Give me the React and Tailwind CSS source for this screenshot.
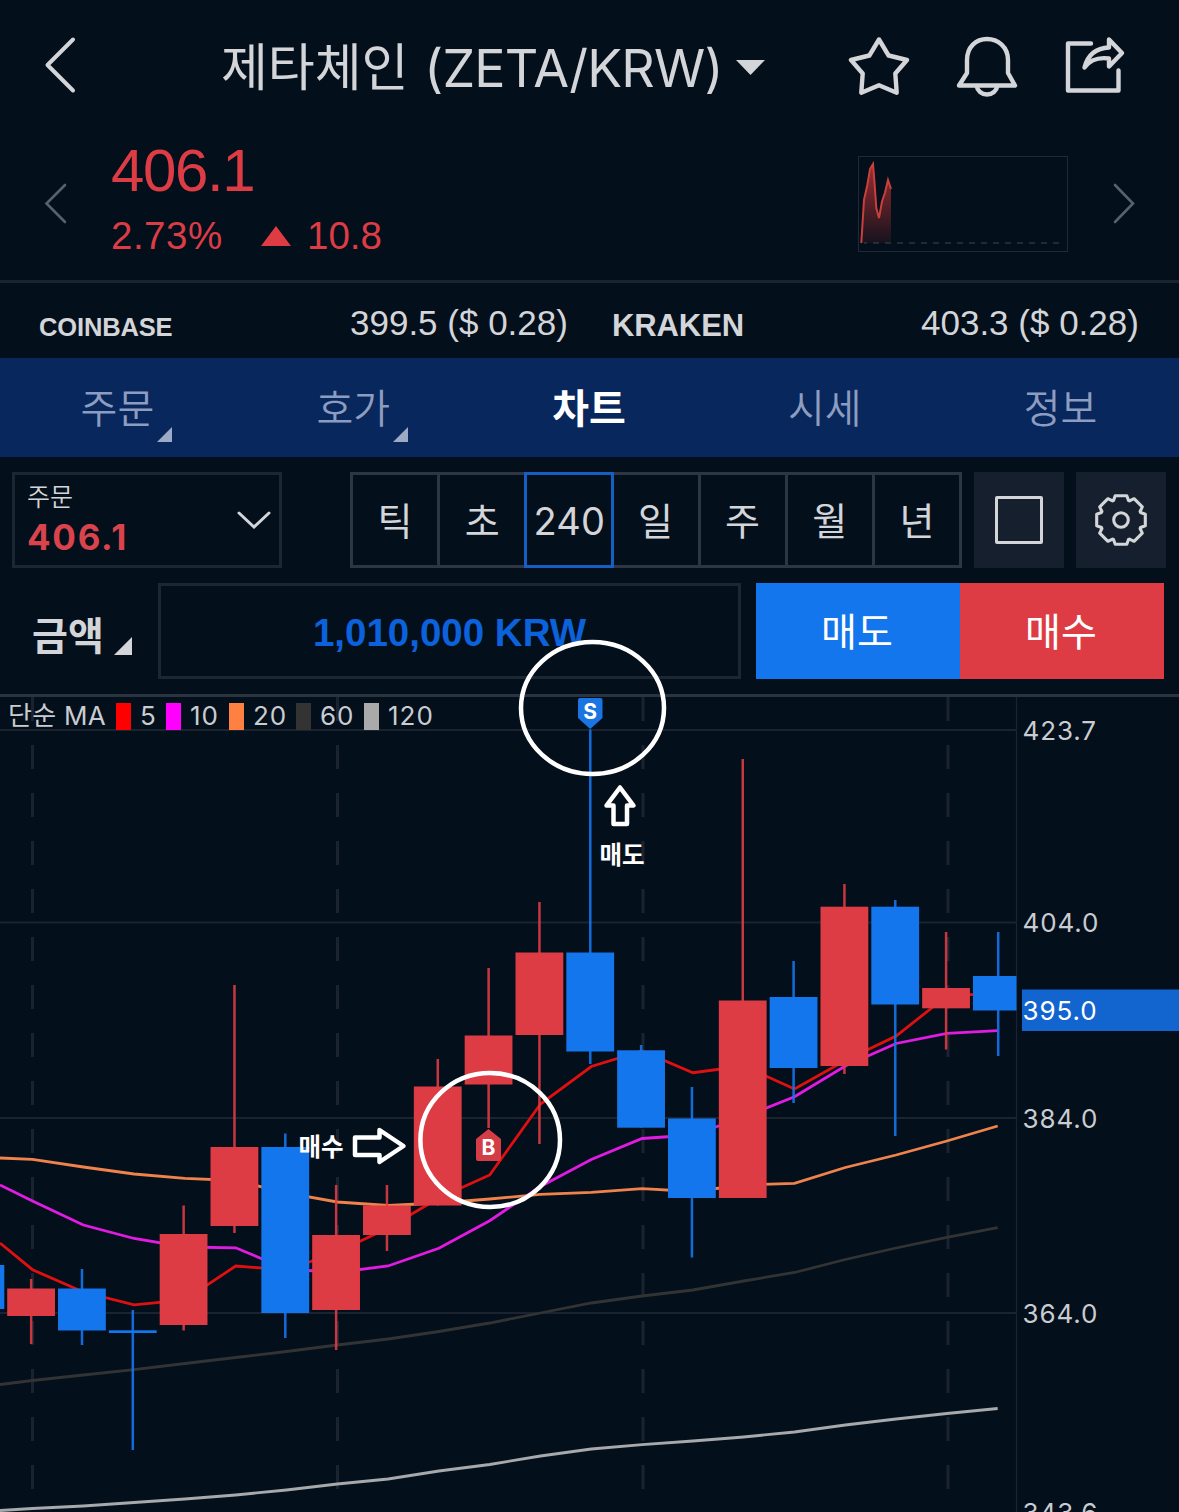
const RED = '#dd3c44';
const BLUE = '#1476ec';

const TABS = [
  { label: '주문', more: true },
  { label: '호가', more: true },
  { label: '차트', active: true },
  { label: '시세' },
  { label: '정보' },
];

const PERIODS = ['틱', '초', '240', '일', '주', '월', '년'];

const LEGEND = [
  { label: '5', color: 'bg-[#ff0000]', width: 'w-[26px]' },
  { label: '10', color: 'bg-[#ff00ff]', width: 'w-[39px]' },
  { label: '20', color: 'bg-[#ff8040]', width: 'w-[43px]' },
  { label: '60', color: 'bg-[#333333]', width: 'w-[44px]' },
  { label: '120', color: 'bg-[#aaaaaa]', width: 'w-[56px]' },
];

// [up, high, body top, body bottom, low]
const CANDLES = [
  [true, 1279, 1288.5, 1316, 1344],
  [false, 1269, 1288.5, 1330.5, 1345],
  [false, 1310, 1330.3, 1333, 1450],
  [true, 1205.5, 1234, 1325, 1330.5],
  [true, 985, 1147, 1226, 1233],
  [false, 1133.5, 1147, 1313, 1338],
  [true, 1185, 1235, 1310, 1350],
  [true, 1185, 1205.5, 1235, 1251],
  [true, 1059, 1086.5, 1205.5, 1205.5],
  [true, 968, 1035.5, 1084.5, 1128],
  [true, 902, 952.5, 1035, 1144],
  [false, 729.5, 952.5, 1051.5, 1064],
  [false, 1045, 1050.3, 1127.7, 1127.7],
  [false, 1087, 1118.5, 1198, 1257.5],
  [true, 759, 1000.5, 1198, 1198],
  [false, 961, 997, 1068, 1103],
  [true, 884, 906.7, 1066, 1074],
  [false, 900, 906.7, 1004.5, 1136],
  [true, 932, 988, 1008.3, 1049.5],
  [false, 932, 976, 1010.5, 1056],
];

// first value sits on the left edge, the rest one per candle
const AVERAGES = [
  { color: '#a7a9ac', values: [1510.5, 1508.5, 1506, 1502.5, 1499, 1495, 1490, 1484, 1479, 1471, 1464.5, 1456, 1449, 1444.6, 1441, 1437, 1432, 1425, 1419, 1413.5, 1408.5] },
  { color: '#333333', values: [1384.5, 1380.5, 1375, 1369.7, 1363.5, 1357.5, 1351.5, 1345, 1339, 1331.5, 1323, 1313, 1303, 1296, 1290, 1281, 1272.5, 1259.5, 1248, 1237.3, 1227.7] },
  { color: '#f0834c', values: [1158, 1159.3, 1167, 1174, 1178.3, 1180.5, 1193, 1202, 1205.5, 1203, 1199, 1194.3, 1192.3, 1188.7, 1191.5, 1185, 1183.3, 1167.5, 1155, 1141, 1126] },
  { color: '#e21be2', values: [1185, 1201, 1225, 1238.5, 1247, 1247.8, 1269, 1272.5, 1266, 1248.3, 1220.7, 1186.5, 1159.5, 1138.5, 1135, 1117, 1096.7, 1066, 1043.5, 1033.3, 1030.7] },
  { color: '#e01010', values: [1243, 1269.7, 1292, 1304.8, 1300, 1266, 1270, 1252, 1228, 1198, 1175, 1104, 1066.5, 1051, 1072.7, 1066, 1089, 1060.5, 1036, 996, 993] },
];

const PRICES = [
  { label: '423.7', y: 730 },
  { label: '404.0', y: 922.5 },
  { label: '384.0', y: 1118 },
  { label: '364.0', y: 1313 },
  { label: '343.6', y: 1512 },
];

const TOP = 697;

function gearPoints() {
  const tooth = [[-7.5, -19.5], [-5.8, -24.3], [5.8, -24.3], [7.5, -19.5]];
  const points = [];
  for (let i = 0; i < 8; i++) {
    const a = (i * Math.PI) / 4;
    tooth.forEach(([x, y]) => {
      points.push(`${x * Math.cos(a) - y * Math.sin(a)},${x * Math.sin(a) + y * Math.cos(a)}`);
    });
  }
  return points.join(' ');
}

function Corner({ className }) {
  return (
    <svg className={className} viewBox="0 0 16 16" preserveAspectRatio="none" fill="currentColor">
      <path d="M16 0V16H0Z" />
    </svg>
  );
}

function Header() {
  return (
    <header className="flex h-[130px] items-start pl-11 text-[#d3d5d8]">
      <svg className="mt-9 h-[58px] w-8" viewBox="0 0 32 58" fill="none" stroke="currentColor" strokeWidth="4" strokeLinecap="round" strokeLinejoin="round">
        <path d="M29 3.5L3.5 29L29 54.5" />
      </svg>
      <h1 className="mt-[29px] ml-[145px] flex h-[76px] w-[500px] items-center whitespace-nowrap">
        <span className="-mt-[6px] text-[51px] tracking-[-0.1px]">제타체인</span>
        <span className="mt-[3px] ml-[16px] font-['Inter'] text-[52px] tracking-[-0.8px]">(ZETA/KRW)</span>
      </h1>
      <svg className="mt-[60px] ml-[15px] h-[15px] w-[29px]" viewBox="0 0 29 15" fill="currentColor">
        <path d="M0 0H29L14.5 15Z" />
      </svg>
      <svg className="mt-9 ml-[83px] h-[62px] w-[62px]" viewBox="848 36 62 62" fill="none" stroke="currentColor" strokeWidth="4.4" strokeLinejoin="round">
        <path d="M879 39.5L888.6 55.5L907 60L895.3 73.5L896.7 92.7L879 85.3L861.3 92.7L862.7 73.5L851 60L869.4 55.5Z" />
      </svg>
      <svg className="mt-9 ml-[46px] h-[62px] w-[62px]" viewBox="956 36 62 62" fill="none" stroke="currentColor" strokeWidth="4.4" strokeLinejoin="round">
        <path d="M967 73V60C967 47 976 39 987 39S1008 47 1008 60V73L1015 85.5H959Z" />
        <path d="M976.5 85.5C977.5 91 981.5 94.5 987 94.5S996.5 91 997.5 85.5" />
      </svg>
      <svg className="mt-9 ml-[46px] h-[62px] w-[62px]" viewBox="1064 36 62 62" fill="none" stroke="currentColor" strokeWidth="4.4" strokeLinecap="round" strokeLinejoin="round">
        <path d="M1091 43.5H1068V90.5H1118.5V70.5" />
        <path d="M1084.5 67.5C1088 54 1097 48 1109 47.5V39.5L1122 53L1109 66.5V58.5C1098 57 1090 60 1084.5 67.5Z" />
      </svg>
    </header>
  );
}

function Ticker() {
  return (
    <section className="flex h-[153px] items-start border-b-[3px] border-[#1a2331] pl-11 font-['Liberation_Sans']">
      <svg className="mt-[53px] h-[41px] w-[23px] text-[#59616c]" viewBox="0 0 23 41" fill="none" stroke="currentColor" strokeWidth="2.6" strokeLinecap="round">
        <path d="M21 2L2.5 20.5L21 39" />
      </svg>
      <div className="ml-[44px] w-[747px] text-[#dd3c44]">
        <div className="mt-[10px] h-[62px] text-[60px] leading-[62px] tracking-[-1.4px]">406.1</div>
        <div className="mt-3 flex h-11 items-center text-[38.5px] leading-[44px]">
          <span className="w-[150px] tracking-[0.5px]">2.73%</span>
          <svg className="mr-4 h-5 w-[30px]" viewBox="0 0 30 20" fill="currentColor">
            <path d="M15 0L30 20H0Z" />
          </svg>
          <span>10.8</span>
        </div>
      </div>
      <svg className="mt-[26px] h-24 w-[210px]" viewBox="0 0 210 96" fill="none">
        <defs>
          <linearGradient id="spark" x1="0" y1="0" x2="0" y2="1">
            <stop offset="0" stopColor="#b83232" stopOpacity="0.85" />
            <stop offset="1" stopColor="#b83232" stopOpacity="0.1" />
          </linearGradient>
        </defs>
        <rect x="0.5" y="0.5" width="209" height="95" stroke="#202a36" />
        <path d="M6 87H203" stroke="#2b343f" strokeWidth="1.5" strokeDasharray="6 6" strokeDashoffset="3" />
        <path d="M3.3 87L6 44L9.3 29L12 13L15 8L16.7 29L18.3 52L21 62L24 45.5L27 36.5L30 24L33 33V87Z" fill="url(#spark)" />
        <path d="M3.3 87L6 44L9.3 29L12 13L15 8L16.7 29L18.3 52L21 62L24 45.5L27 36.5L30 24L33 33" stroke="#c8403c" strokeWidth="2" />
      </svg>
      <svg className="mt-[53px] ml-[45px] h-[41px] w-[23px] text-[#59616c]" viewBox="0 0 23 41" fill="none" stroke="currentColor" strokeWidth="2.6" strokeLinecap="round">
        <path d="M2 2L20 20.5L2 39" />
      </svg>
    </section>
  );
}

function Exchanges() {
  return (
    <section className="flex h-[75px] items-center pl-[39px] font-['Liberation_Sans'] text-[#d3d5d8]">
      <b className="mt-[13px] w-[311px] text-[25.5px] tracking-[-0.15px]">COINBASE</b>
      <span className="mt-[6px] w-[262px] text-[35px]">399.5 ($ 0.28)</span>
      <b className="mt-[11px] w-[309px] text-[31px] tracking-[-0.1px]">KRAKEN</b>
      <span className="mt-[6px] text-[35px]">403.3 ($ 0.28)</span>
    </section>
  );
}

function Tabs() {
  return (
    <nav className="grid h-[99px] grid-cols-5 bg-[#08275c] text-[#8d9dc0]">
      {TABS.map((tab) => (
        <div key={tab.label} className="relative flex items-center justify-center pr-px pb-1 text-[40px]">
          <span className={tab.active ? 'font-bold text-white' : 'font-[350]'}>{tab.label}</span>
          {tab.more && <Corner className="absolute right-16 bottom-[15px] h-[15px] w-[15px] text-[#9caac6]" />}
        </div>
      ))}
    </nav>
  );
}

function Controls() {
  return (
    <section className="flex h-24 text-[#d3d5d8]">
      <div className="ml-3 flex w-[270px] items-center border-[3px] border-[#1d2733] pl-3">
        <div className="w-[210px]">
          <div className="-mt-[5px] h-[39px] text-[25px] leading-[38px] font-[350]">주문</div>
          <div className="h-[44px] font-['Inter'] text-[35px] leading-[44px] font-bold tracking-[1.7px] text-[#d9444c]">406.1</div>
        </div>
        <svg className="h-[18px] w-[34px]" viewBox="0 0 34 18" fill="none" stroke="currentColor" strokeWidth="3" strokeLinecap="round">
          <path d="M2 2L17 16L32 2" />
        </svg>
      </div>
      <div className="ml-[68px] flex w-[612px] border-[3px] border-[#2d3743]">
        {PERIODS.map((period) =>
          period === '240' ? (
            <div key={period} className="z-10 -my-[3px] mr-[-1px] ml-[-3px] flex w-[90px] shrink-0 items-center justify-center border-[3px] border-[#165fc2] pt-[3px] font-['Inter'] text-[38px] tracking-[0.2px]">
              {period}
            </div>
          ) : (
            <div key={period} className="flex flex-1 items-center justify-center border-r-[3px] border-[#2d3743] pb-1 text-[38px] font-normal last:border-r-0">
              {period}
            </div>
          )
        )}
      </div>
      <div className="ml-3 flex w-[90px] items-center justify-center bg-[#151f2d]">
        <div className="size-12 rounded-[2px] border-[3px] border-[#d3d5d8]" />
      </div>
      <div className="ml-3 flex w-[90px] items-center justify-center bg-[#151f2d]">
        <svg className="size-[54px]" viewBox="-27 -27 54 54" fill="none" stroke="currentColor" strokeWidth="3.1" strokeLinejoin="round">
          <polygon points={gearPoints()} />
          <circle r="7.3" />
        </svg>
      </div>
    </section>
  );
}

function OrderBar() {
  return (
    <section className="mt-[15px] flex h-24 text-[#d3d5d8]">
      <div className="flex w-[158px] items-center pl-8">
        <span className="mt-1 text-[39px] leading-none font-bold">금액</span>
        <Corner className="mt-[30px] ml-[10px] h-[18px] w-[18px]" />
      </div>
      <div className="flex w-[583px] items-center justify-center border-[3px] border-[#1d2733] pt-1 font-['Liberation_Sans'] text-[38.5px] font-bold text-[#0b62da]">
        1,010,000 KRW
      </div>
      <button className="ml-[15px] w-[204px] bg-[#1476ec] pr-[2px] pb-1 text-[39px] text-white">매도</button>
      <button className="w-[204px] bg-[#dd3c44] pr-[2px] pb-1 text-[39px] text-white">매수</button>
    </section>
  );
}

function Candle({ index, data: [up, high, top, bottom, low] }) {
  const x = 7.2 + index * 50.83;
  const color = up ? RED : BLUE;
  const last = index === CANDLES.length - 1;
  return (
    <g fill={color}>
      <rect x={x + (last ? 24 : 22.7)} y={high} width="2.5" height={low - high} opacity="0.9" />
      <rect x={x} y={top} width={last ? 43.5 : 47.8} height={bottom - top} />
    </g>
  );
}

function Chart() {
  return (
    <section className="relative mt-[15px] h-[818px] overflow-hidden border-t-[3px] border-[#2a3440]">
      <svg className="block h-[815px] w-[1179px]" viewBox={`0 ${TOP} 1179 815`} fontFamily="Inter, 'Noto Sans CJK KR', sans-serif">
        <g stroke="#1a232f">
          {PRICES.slice(0, 4).map((p) => (
            <path key={p.label} d={`M0 ${p.y}H1016`} strokeWidth="2" />
          ))}
          {[32.5, 337.5, 643, 948].map((x) => (
            <path key={x} d={`M${x} ${TOP}V1512`} strokeWidth="3" strokeDasharray="24 24" />
          ))}
          <path d={`M1016.5 ${TOP}V1512`} strokeWidth="1.3" />
        </g>

        {AVERAGES.map((line) => (
          <polyline
            key={line.color}
            points={line.values.map((v, i) => `${i === 0 ? 0 : 32.5 + (i - 1) * 50.8},${v}`).join(' ')}
            fill="none"
            stroke={line.color}
            strokeWidth="2.8"
          />
        ))}

        <rect x="0" y="1265" width="4.3" height="44" fill={BLUE} />
        {CANDLES.map((data, i) => (
          <Candle key={i} index={i} data={data} />
        ))}

        {/* price axis */}
        <rect x="1022" y="989.5" width="157" height="41.5" fill="#1264cf" />
        <g fontSize="26" letterSpacing="0.9" fill="#c9ccd0">
          {PRICES.map((p) => (
            <text key={p.label} x="1022.5" y={p.y + 9.7}>{p.label}</text>
          ))}
          <text x="1022.5" y="1020.3" fill="#ffffff">395.0</text>
        </g>

        {/* trade markers */}
        <path d="M580 698H600.5Q602.5 698 602.5 700V718L590.2 729L578 718V700Q578 698 580 698Z" fill="#1a74e2" />
        <path d="M488.5 1129L501 1139V1159Q501 1161 499 1161H478Q476 1161 476 1159V1139Z" fill="#d43c46" />
        <g fill="#ffffff" fontWeight="700" fontSize="21" textAnchor="middle">
          <text x="590.2" y="718.5">S</text>
          <text x="488.5" y="1155">B</text>
        </g>

        {/* hand-drawn notes */}
        <g fill="#ffffff" fontWeight="700" fontSize="24.5" textAnchor="middle">
          <text x="622" y="864">매도</text>
          <text x="321" y="1156">매수</text>
        </g>
        <g fill="none" stroke="#ffffff" strokeWidth="4.5" strokeLinejoin="round">
          <path d="M620 787.5L633.5 805.5H627V824H613.5V805.5H606.5Z" />
          <path d="M355 1137.5H379.5V1130L403.5 1146L379.5 1162V1155H355Z" />
          <ellipse cx="490.2" cy="1140" rx="69.8" ry="67" />
        </g>
      </svg>

      <div className="absolute top-0 left-2 flex h-[38px] items-center font-['Inter','Noto_Sans_CJK_KR'] text-[26px] tracking-[1px] text-[#c9ccd0]">
        <span className="-mt-px w-[108px] tracking-[0.3px] whitespace-nowrap">단순 MA</span>
        {LEGEND.map((item) => (
          <div key={item.label} className="flex items-center">
            <i className={`h-[27px] w-[15px] ${item.color}`} />
            <span className={`-mt-[2px] box-content pl-[9px] ${item.width}`}>{item.label}</span>
          </div>
        ))}
      </div>
    </section>
  );
}

export default function App() {
  return (
    <div className="relative h-[1512px] w-[1179px] overflow-hidden bg-[#040f1c] font-['Noto_Sans_CJK_KR',sans-serif]">
      <Header />
      <Ticker />
      <Exchanges />
      <Tabs />
      <div className="pt-[15px]">
        <Controls />
        <OrderBar />
        <Chart />
      </div>
      <svg className="absolute top-[638px] left-[516px] h-[140px] w-[154px]" viewBox="516 638 154 140" fill="none">
        <ellipse cx="592.5" cy="708" rx="71.5" ry="66" stroke="#ffffff" strokeWidth="4.5" />
      </svg>
    </div>
  );
}
